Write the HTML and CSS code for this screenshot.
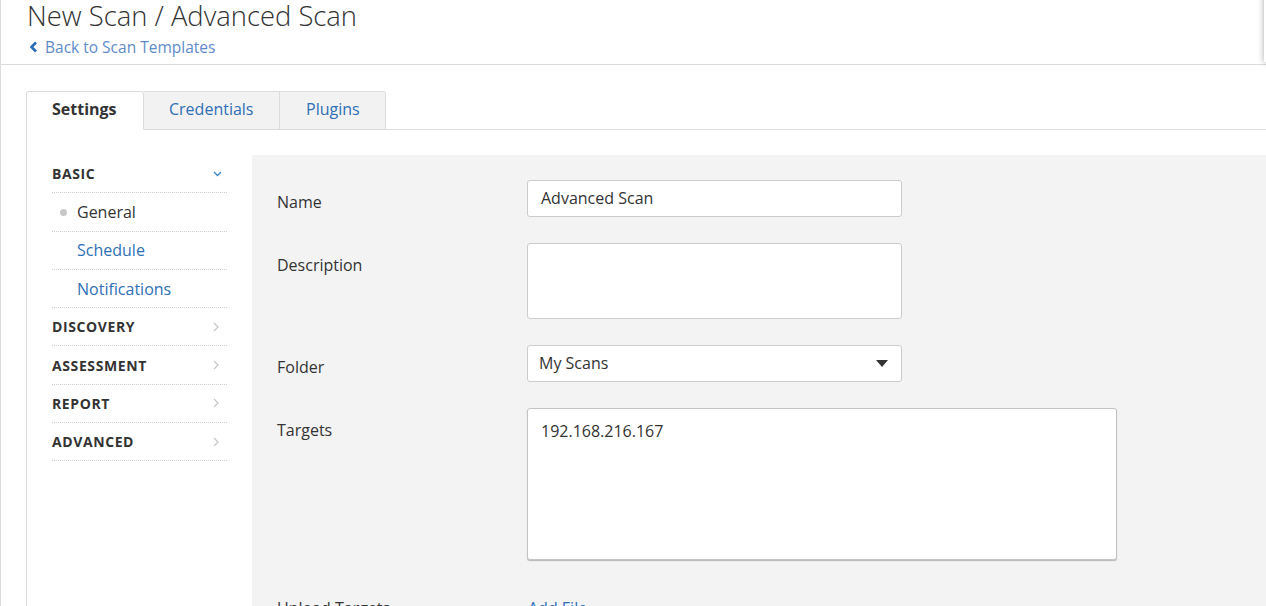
FILE: index.html
```html
<!DOCTYPE html>
<html>
<head>
<meta charset="utf-8">
<link rel="stylesheet" href="styles.css">
</head>
<body>
<div class="page">
  <div class="edge-shadow"></div>
  <header class="header">
    <h1 class="title">New Scan / Advanced Scan</h1>
    <a class="back" href="#"><svg class="back-icon" width="9" height="12" viewBox="0 0 9 12"><path d="M7 1.5 L2.5 6 L7 10.5" fill="none" stroke="#2a6cb5" stroke-width="2.6"/></svg>Back to Scan Templates</a>
  </header>
  <div class="body">
    <div class="tabs">
      <div class="tab active">Settings</div>
      <div class="tab">Credentials</div>
      <div class="tab">Plugins</div>
      <div class="tab-fill"></div>
    </div>
    <div class="panel">
      <nav class="nav">
        <div class="nav-row head"><span>BASIC</span><svg width="9" height="6" viewBox="0 0 9 6"><path d="M1 1 L4.5 4.5 L8 1" fill="none" stroke="#3a86c8" stroke-width="1.3"/></svg></div>
        <div class="nav-row sub current"><span class="dot"></span>General</div>
        <div class="nav-row sub link">Schedule</div>
        <div class="nav-row sub link">Notifications</div>
        <div class="nav-row head"><span>DISCOVERY</span><svg class="chev" width="6" height="10" viewBox="0 0 6 10"><path d="M1 1 L5 5 L1 9" fill="none" stroke="#c8c8c8" stroke-width="1.3"/></svg></div>
        <div class="nav-row head"><span>ASSESSMENT</span><svg class="chev" width="6" height="10" viewBox="0 0 6 10"><path d="M1 1 L5 5 L1 9" fill="none" stroke="#c8c8c8" stroke-width="1.3"/></svg></div>
        <div class="nav-row head"><span>REPORT</span><svg class="chev" width="6" height="10" viewBox="0 0 6 10"><path d="M1 1 L5 5 L1 9" fill="none" stroke="#c8c8c8" stroke-width="1.3"/></svg></div>
        <div class="nav-row head"><span>ADVANCED</span><svg class="chev" width="6" height="10" viewBox="0 0 6 10"><path d="M1 1 L5 5 L1 9" fill="none" stroke="#c8c8c8" stroke-width="1.3"/></svg></div>
      </nav>
      <section class="form">
        <div class="row">
          <label class="label">Name</label>
          <div class="field input">Advanced Scan</div>
        </div>
        <div class="row">
          <label class="label">Description</label>
          <div class="field textarea"></div>
        </div>
        <div class="row">
          <label class="label">Folder</label>
          <div class="field select">My Scans<svg width="12" height="7" viewBox="0 0 12 7"><path d="M0 0 L12 0 L6 7 Z" fill="#333"/></svg></div>
        </div>
        <div class="row">
          <label class="label">Targets</label>
          <div class="field targets">192.168.216.167</div>
        </div>
        <div class="row">
          <label class="label">Upload Targets</label>
          <a class="addfile" href="#">Add File</a>
        </div>
      </section>
    </div>
  </div>
</div>
</body>
</html>
```
FILE: styles.css
```css
* { box-sizing: border-box; }
html, body { margin: 0; padding: 0; overflow: hidden; }
body {
  font-family: "Open Sans", "Liberation Sans", sans-serif;
  color: #333;
  background: #fff;
  width: 1266px;
  height: 606px;
}
.page {
  position: relative;
  height: 606px;
  overflow: hidden;
  border-left: 1px solid #dcdcdc;
}
.edge-shadow {
  position: absolute;
  left: 1263px;
  top: -10px;
  width: 20px;
  height: 72px;
  background: #fff;
  box-shadow: 0 0 6px rgba(0,0,0,0.35);
}
.header {
  padding: 0 0 0 26px;
  height: 65px;
  border-bottom: 1px solid #dcdcdc;
}
.title {
  margin: 0;
  font-size: 27.4px;
  font-weight: 300;
  line-height: 32px;
  color: #333;
}
.back {
  display: flex;
  align-items: center;
  gap: 7px;
  margin-top: 3px;
  font-size: 15.5px;
  line-height: 24px;
  color: #5f8bc8;
  text-decoration: none;
}
.back-icon { margin-left: 2px; }
.body {
  padding: 26px 0 0 25px;
}
.tabs {
  display: flex;
  height: 39px;
}
.tab {
  height: 39px;
  padding: 0 25px;
  font-size: 16px;
  line-height: 35px;
  color: #2f6fb5;
  background: #f2f2f2;
  border: 1px solid #dcdcdc;
  border-left: none;
  border-bottom: 1px solid #dcdcdc;
  border-radius: 0 3px 0 0;
}
.tab.active {
  width: 118px;
  background: #fff;
  color: #333;
  font-weight: 700;
  border-left: 1px solid #dcdcdc;
  border-bottom: 1px solid #fff;
  border-radius: 3px 3px 0 0;
}
.tab:nth-child(2) { width: 136px; padding: 0 0 0 25px; border-radius: 0; }
.tab:nth-child(3) { width: 106px; padding: 0 0 0 26px; }
.tab-fill {
  flex: 1;
  border-bottom: 1px solid #dcdcdc;
}
.panel {
  display: flex;
  gap: 25px;
  padding: 25px 0 0 25px;
  border-left: 1px solid #dcdcdc;
  height: 520px;
}
.nav {
  width: 175px;
  flex: none;
}
.nav-row {
  display: flex;
  align-items: center;
  height: 38.3px;
  border-bottom: 1px dotted #cfcfcf;
}
.nav-row.head {
  justify-content: space-between;
  font-size: 14px;
  font-weight: 700;
  color: #333;
  padding-right: 5px;
  letter-spacing: 0.6px;
}
.nav-row.head .chev { margin-right: 3px; }
.nav-row.sub {
  font-size: 16px;
  padding-left: 25px;
  position: relative;
}
.nav-row.link { color: #2f6fb5; }
.dot {
  position: absolute;
  left: 8px;
  top: 16px;
  width: 7px;
  height: 7px;
  border-radius: 50%;
  background: #c8c8c8;
}
.form {
  flex: 1;
  background: #f3f3f3;
  padding: 25px 0 0 25px;
}
.row {
  display: flex;
  margin-bottom: 26px;
}
.label {
  width: 250px;
  flex: none;
  font-size: 16px;
  line-height: 20px;
  padding-top: 12px;
  color: #333;
}
.field {
  background: #fff;
  border: 1px solid #cccccc;
  border-radius: 3px;
  font-size: 16px;
  color: #333;
}
.input {
  width: 375px;
  height: 37px;
  line-height: 35px;
  padding-left: 13px;
}
.textarea {
  width: 375px;
  height: 76px;
}
.select {
  width: 375px;
  height: 37px;
  line-height: 35px;
  padding: 0 13px 0 11px;
  display: flex;
  align-items: center;
  justify-content: space-between;
}
.targets {
  width: 590px;
  height: 152px;
  padding: 11px 13px;
  line-height: 22px;
  border-color: #c4c4c4;
  box-shadow: 0 1px 1px rgba(0,0,0,0.25);
}
.addfile {
  padding-top: 12px;
  margin-left: 1px;
  font-size: 16px;
  line-height: 20px;
  color: #2f6fb5;
  text-decoration: none;
}
```
